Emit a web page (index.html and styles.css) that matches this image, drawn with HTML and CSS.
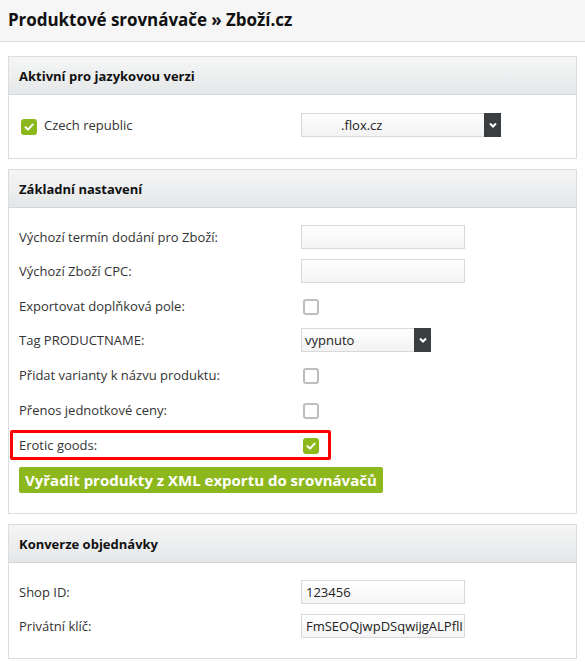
FILE: index.html
```html
<!DOCTYPE html>
<html lang="cs">
<head>
<meta charset="utf-8">
<link rel="stylesheet" href="styles.css">
</head>
<body>
<div class="topbar"><h1 class="title">Produktové srovnávače » Zboží.cz</h1></div>

<section class="panel">
  <div class="panel-head">Aktivní pro jazykovou verzi</div>
  <div class="panel-body single">
    <div class="row">
      <label class="label check-label"><span class="cb checked"><svg viewBox="0 0 16 16" width="16" height="16"><path d="M4.5 8.2 L7 10.6 L11.6 5.6" fill="none" stroke="#fff" stroke-width="2" stroke-linecap="round" stroke-linejoin="round"/></svg></span>Czech republic</label>
      <div class="field"><div class="select wide"><span class="select-text pad">.flox.cz</span><span class="select-arrow"><svg viewBox="0 0 10 10" width="10" height="10"><path d="M2 3.5 L5 6.5 L8 3.5" fill="none" stroke="#fff" stroke-width="2"/></svg></span></div></div>
    </div>
  </div>
</section>

<section class="panel">
  <div class="panel-head">Základní nastavení</div>
  <div class="panel-body">
    <div class="row"><span class="label">Výchozí termín dodání pro Zboží:</span><div class="field"><span class="input"></span></div></div>
    <div class="row"><span class="label">Výchozí Zboží CPC:</span><div class="field"><span class="input"></span></div></div>
    <div class="row cbrow"><span class="label">Exportovat doplňková pole:</span><div class="field"><span class="cb"></span></div></div>
    <div class="row"><span class="label">Tag PRODUCTNAME:</span><div class="field"><div class="select narrow"><span class="select-text">vypnuto</span><span class="select-arrow"><svg viewBox="0 0 10 10" width="10" height="10"><path d="M2 3.5 L5 6.5 L8 3.5" fill="none" stroke="#fff" stroke-width="2"/></svg></span></div></div></div>
    <div class="row cbrow"><span class="label">Přidat varianty k názvu produktu:</span><div class="field"><span class="cb"></span></div></div>
    <div class="row cbrow"><span class="label">Přenos jednotkové ceny:</span><div class="field"><span class="cb"></span></div></div>
    <div class="row cbrow highlight"><span class="label">Erotic goods:</span><div class="field"><span class="cb checked"><svg viewBox="0 0 16 16" width="16" height="16"><path d="M4.5 8.2 L7 10.6 L11.6 5.6" fill="none" stroke="#fff" stroke-width="2" stroke-linecap="round" stroke-linejoin="round"/></svg></span></div></div>
    <div class="btn-row"><span class="btn">Vyřadit produkty z XML exportu do srovnávačů</span></div>
  </div>
</section>

<section class="panel">
  <div class="panel-head">Konverze objednávky</div>
  <div class="panel-body">
    <div class="row"><span class="label">Shop ID:</span><div class="field"><span class="input">123456</span></div></div>
    <div class="row"><span class="label">Privátní klíč:</span><div class="field"><span class="input">FmSEOQjwpDSqwijgALPflI</span></div></div>
  </div>
</section>
</body>
</html>
```
FILE: styles.css
```css
*, *::before, *::after { box-sizing: border-box; }
body {
  margin: 0;
  font-family: "Open Sans", "Liberation Sans", sans-serif;
  font-size: 13px;
  color: #333;
  background: #fff;
}
.topbar {
  height: 42px;
  background: #f6f6f6;
  border-bottom: 1px solid #dcdcdc;
  padding: 0 8px;
  display: flex;
  align-items: center;
  margin-bottom: 14px;
}
.title {
  margin: 0;
  font-size: 17px;
  font-weight: 700;
  color: #111;
  line-height: 1;
  position: relative;
  top: -1px;
  letter-spacing: -0.05px;
}
.panel {
  margin: 0 8px 10px;
  border: 1px solid #dcdcdc;
}
.panel-head {
  height: 38px;
  padding: 0 10px;
  display: flex;
  align-items: center;
  font-weight: 700;
  font-size: 13px;
  color: #111;
  background: linear-gradient(#f5f5f5, #e4e7e9);
  border-bottom: 1px solid #d6d6d6;
}
.panel-body {
  padding: 17px 10px 20px;
  display: flex;
  flex-direction: column;
  gap: 10px;
}
.panel-body.single { padding: 18px 10px 21px; }
.row {
  display: flex;
  align-items: center;
  height: 24px;
}
.row.cbrow { height: 25px; }
.cbrow .cb { margin-top: 2px; }
.label {
  width: 282px;
  flex: none;
  display: flex;
  align-items: center;
  gap: 7px;
}
.check-label .cb { margin-top: 4px; }
.field { display: flex; align-items: center; }
.cb {
  width: 16px;
  height: 16px;
  border: 2px solid #bdbdbd;
  border-radius: 3px;
  margin-left: 2px;
  display: flex;
  align-items: center;
  justify-content: center;
  background: #fff;
}
.cb.checked {
  background: #8cb81c;
  border: 0;
}
.input {
  width: 164px;
  height: 24px;
  border: 1px solid #d9d9d9;
  background: linear-gradient(#fff, #f4f4f4);
  padding: 0 4px;
  display: flex;
  align-items: center;
  overflow: hidden;
  white-space: nowrap;
  color: #222;
}
.select {
  height: 24px;
  display: flex;
  border: 1px solid #d9d9d9;
  background: linear-gradient(#fff, #f2f2f2);
}
.select.wide { width: 200px; }
.select.narrow { width: 130px; }
.select-text {
  flex: 1;
  display: flex;
  align-items: center;
  padding-left: 3px;
  color: #222;
}
.select-text.pad { padding-left: 39px; }
.select-arrow {
  width: 17px;
  margin: -1px -1px -1px 0;
  background: #3a3e40;
  display: flex;
  align-items: center;
  justify-content: center;
}
.highlight { position: relative; }
.highlight::after {
  content: "";
  position: absolute;
  left: -9px;
  top: -2px;
  width: 321px;
  bottom: -3px;
  border: 3px solid #f00;
  border-radius: 2px;
}
.btn-row { display: flex; }
.btn {
  background: #8db81d;
  color: #fff;
  font-weight: 700;
  font-size: 15px;
  height: 26px;
  padding: 0 6px;
  display: flex;
  align-items: center;
  border-radius: 2px;
  white-space: nowrap;
}
```
